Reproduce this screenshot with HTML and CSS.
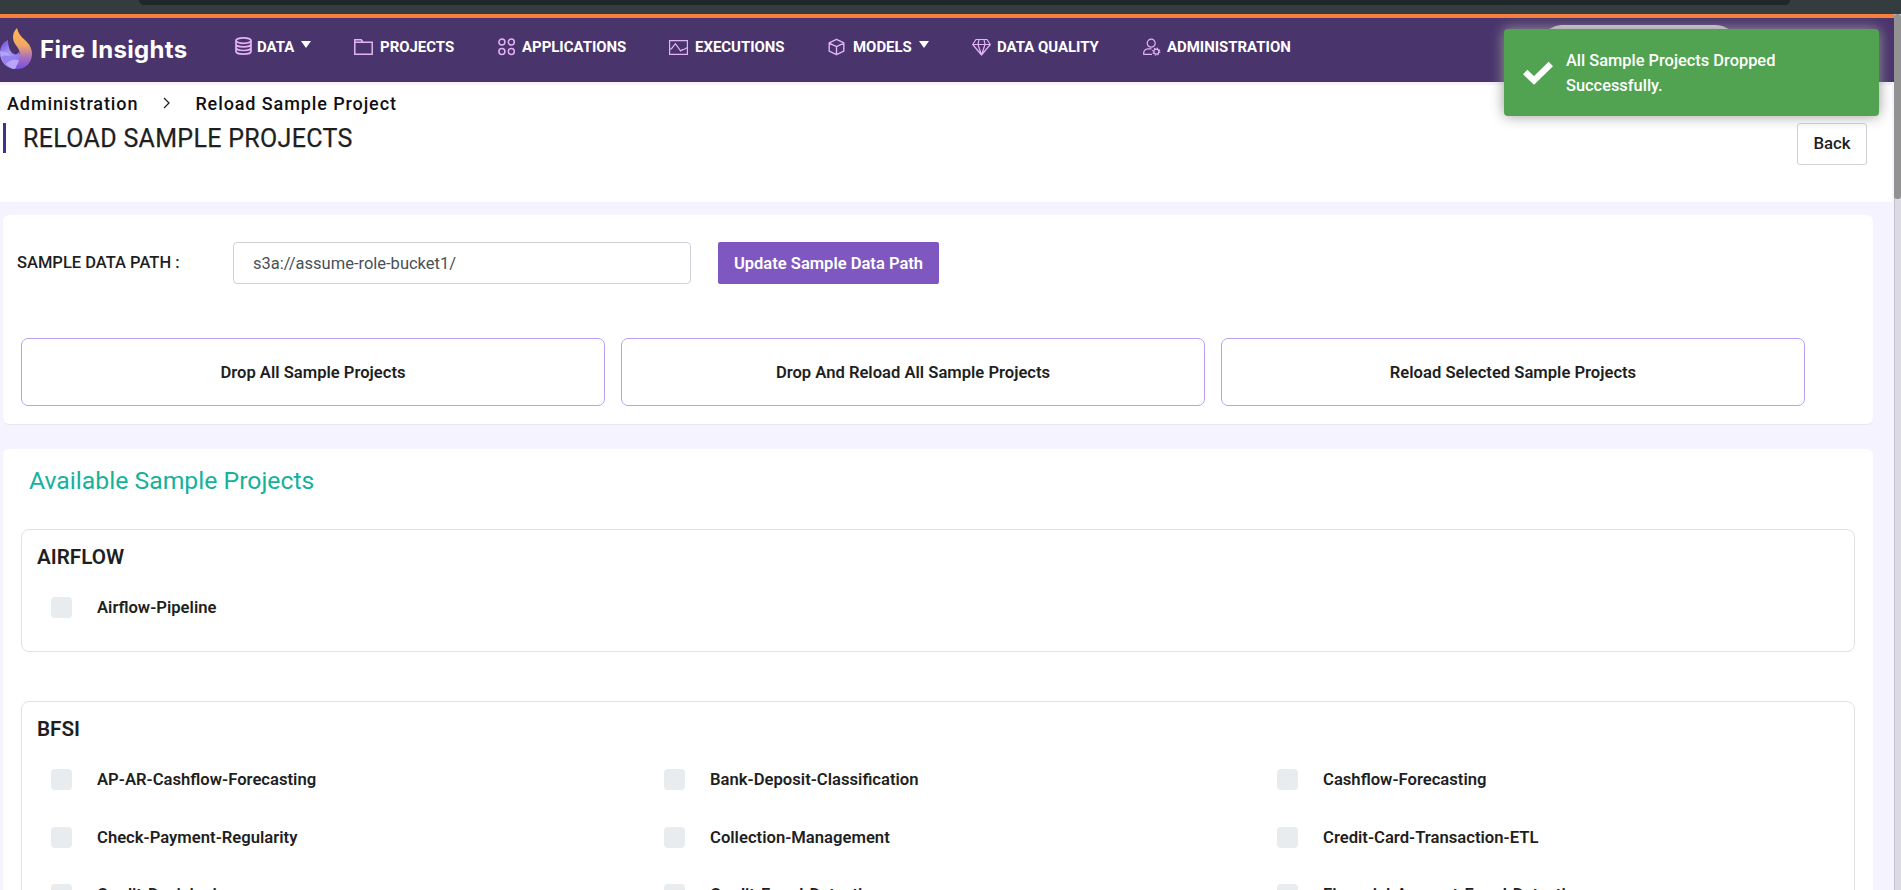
FILE: index.html
```html
<!DOCTYPE html>
<html lang="en">
<head>
<meta charset="utf-8">
<title>Fire Insights</title>
<link rel="stylesheet" href="styles.css">
</head>
<body>
<div class="chrome"><div class="chrome-bar"></div></div>
<div class="viewport">
  <div class="page">
    <header class="header">
      <div class="brand">
        <svg class="logo" width="33" height="42" viewBox="0 0 33 42">
          <defs>
            <linearGradient id="flame" x1="0" y1="0" x2="0" y2="1"><stop offset="0" stop-color="#ffb84f"/><stop offset=".42" stop-color="#f2a765"/><stop offset=".72" stop-color="#a86fbd"/><stop offset="1" stop-color="#7650e0"/></linearGradient>
            <linearGradient id="base" x1="0" y1="0" x2=".6" y2="1"><stop offset="0" stop-color="#6a45e0"/><stop offset=".5" stop-color="#a897f5"/><stop offset="1" stop-color="#8464e6"/></linearGradient>
          </defs>
          <path d="M8 12C3 14 0 19 0 25c0 9 7 16 16 16l6-8-3-9c-1 2-3 3-5 2-4-1-6-8-6-14z" fill="url(#base)"/>
          <path d="M0 23c5 0 9 2 12 6l8 3-4 9C7 41 0 34 0 23z" fill="#bdb0fa" opacity=".65"/>
          <path d="M1 29c5-3 12-1 19 3l-5 9C8 40 3 36 1 29z" fill="#8e74ec" opacity=".75"/>
          <path d="M6 36c4-5 10-5 14-3l-4 8c-4 0-7-2-10-5z" fill="#b9a6fa"/>
          <path d="M17 0c-4 4-5 9-3 14 2 4 6 7 6 13 0 5-3 10-5 14 10 1 17-6 17-15 0-6-3-10-7-14-4-3-7-7-8-12z" fill="url(#flame)"/>
        </svg>
        <span class="brand-name">Fire Insights</span>
      </div>
      <nav class="nav">
        <a class="nav-item nav-data">
          <svg width="17" height="18" viewBox="0 0 17 18"><g fill="none" stroke="#e3b3f5" stroke-width="1.7"><ellipse cx="8.5" cy="3.6" rx="7.5" ry="2.7"/><path d="M1 3.6v10.8c0 1.5 3.3 2.7 7.5 2.7s7.5-1.2 7.5-2.7V3.6M1 7.2c0 1.5 3.3 2.7 7.5 2.7S16 8.7 16 7.2M1 10.8c0 1.5 3.3 2.7 7.5 2.7s7.5-1.2 7.5-2.7"/></g></svg>
          <span>DATA</span><i class="caret"></i></a>
        <a class="nav-item nav-projects">
          <svg width="19" height="18" viewBox="0 0 19 18"><path d="M.8 16.2V1.8h6.4l1.8 2.4h9.2v12zM.8 4.2H9" fill="none" stroke="#e3b3f5" stroke-width="1.5"/></svg>
          <span>PROJECTS</span></a>
        <a class="nav-item nav-apps">
          <svg width="18" height="18" viewBox="0 0 18 18"><g fill="none" stroke="#e3b3f5" stroke-width="1.5"><circle cx="3.9" cy="4.1" r="3"/><circle cx="13.3" cy="4.1" r="3"/><circle cx="3.9" cy="13.4" r="3"/><circle cx="13.3" cy="13.4" r="3"/></g></svg>
          <span>APPLICATIONS</span></a>
        <a class="nav-item nav-exec">
          <svg width="19" height="18" viewBox="0 0 19 18"><path d="M.6 2.6h17.8v13.8H.6zM1 11.3l1.5-.6 3.9-5 5.2 7.2 1.8-1.2h1l4-2.2" fill="none" stroke="#e3b3f5" stroke-width="1.2"/></svg>
          <span>EXECUTIONS</span></a>
        <a class="nav-item nav-models">
          <svg width="18" height="18" viewBox="0 0 18 18"><path d="M8.5 1.3l7.3 3.5v8.3l-7.3 3.6-7.3-3.6V4.8zM1.2 5.2l7.3 3.5 7.3-3.5M8.5 8.7v8" fill="none" stroke="#e3b3f5" stroke-width="1.4" stroke-linejoin="round"/></svg>
          <span>MODELS</span><i class="caret"></i></a>
        <a class="nav-item nav-quality">
          <svg width="19" height="18" viewBox="0 0 19 18"><path d="M4 1.5h11l3.3 5L9.5 17 .7 6.5zM.7 6.5h17.6M7 1.5L6 6.5 9.5 17 13 6.5l-1-5" fill="none" stroke="#e3b3f5" stroke-width="1.2" stroke-linejoin="round"/></svg>
          <span>DATA QUALITY</span></a>
        <a class="nav-item nav-admin">
          <svg width="18" height="18" viewBox="0 0 18 18"><g fill="none" stroke="#e3b3f5" stroke-width="1.2"><circle cx="8.2" cy="5.2" r="4"/><path d="M9 16.3H.7c-.4-3.3 1.5-5.3 4.2-5.4h3.6"/><circle cx="13.3" cy="13.6" r="2.5"/><circle cx="13.3" cy="13.6" r="3.5" stroke-dasharray="1.4 1.35"/></g></svg>
          <span>ADMINISTRATION</span></a>
      </nav>
      <div class="user-pill"></div>
    </header>

    <section class="page-head">
      <div class="breadcrumb">
        <span>Administration</span>
        <svg width="7" height="12" viewBox="0 0 7 12"><path d="M1 1l5 5-5 5" fill="none" stroke="#222" stroke-width="1.3"/></svg>
        <span>Reload Sample Project</span>
      </div>
      <div class="title-row">
        <h1 class="title">RELOAD SAMPLE PROJECTS</h1>
        <button class="back">Back</button>
      </div>
    </section>

    <section class="card settings">
      <div class="path-row">
        <label class="path-label">SAMPLE DATA PATH :</label>
        <div class="path-input">s3a://assume-role-bucket1/</div>
        <button class="update">Update Sample Data Path</button>
      </div>
      <div class="actions">
        <button class="action">Drop All Sample Projects</button>
        <button class="action">Drop And Reload All Sample Projects</button>
        <button class="action">Reload Selected Sample Projects</button>
      </div>
    </section>

    <section class="card projects">
      <h2 class="projects-title">Available Sample Projects</h2>
      <div class="group">
        <h3 class="group-title">AIRFLOW</h3>
        <div class="items">
          <div class="item"><i class="box"></i>Airflow-Pipeline</div>
        </div>
      </div>
      <div class="group">
        <h3 class="group-title">BFSI</h3>
        <div class="items">
          <div class="item"><i class="box"></i>AP-AR-Cashflow-Forecasting</div>
          <div class="item"><i class="box"></i>Bank-Deposit-Classification</div>
          <div class="item"><i class="box"></i>Cashflow-Forecasting</div>
          <div class="item"><i class="box"></i>Check-Payment-Regularity</div>
          <div class="item"><i class="box"></i>Collection-Management</div>
          <div class="item"><i class="box"></i>Credit-Card-Transaction-ETL</div>
          <div class="item"><i class="box"></i>Credit-Decisioning</div>
          <div class="item"><i class="box"></i>Credit-Fraud-Detection</div>
          <div class="item"><i class="box"></i>Financial-Account-Fraud-Detection</div>
        </div>
      </div>
    </section>
  </div>
  <div class="scrollbar"><div class="thumb"></div></div>
</div>

<div class="toast">
  <svg width="30" height="24" viewBox="0 0 30 24"><path d="M2.200 11l8.800 8.500L27.800 3" fill="none" stroke="#fff" stroke-width="6.200"/></svg>
  <div class="toast-text">All Sample Projects Dropped Successfully.</div>
</div>
</body>
</html>
```
FILE: styles.css
```css
* { box-sizing: border-box; }
html, body { margin: 0; height: 890px; overflow: hidden; }
body {
  display: flex;
  flex-direction: column;
  background: #f5f3ff;
  color: #1f1f1f;
  font-family: Roboto, "Liberation Sans", sans-serif;
}
h1, h2, h3 { margin: 0; }
button { font-family: inherit; padding: 0; color: inherit; }

.chrome { flex: none; height: 14px; padding: 0 111px 0 139px; background: #353c40; }
.chrome-bar { height: 5px; background: #20272b; border-radius: 0 0 12px 12px; }

.viewport { flex: 1; min-height: 0; display: flex; }
.page { flex: 1; min-width: 0; overflow: hidden; }
.scrollbar { flex: none; width: 7px; background: #dcdae3; border-left: 1px solid #c3c1cb; }
.thumb { width: 7px; height: 185px; margin-left: -1px; background: #929292; border-radius: 3px; }

.header {
  position: relative;
  display: flex;
  height: 68px;
  border-top: 4px solid #f67f3c;
  background: #4a346c;
}
.brand { width: 235px; display: flex; padding-top: 10px; }
.logo { flex: none; }
.brand-name {
  margin-left: 7px;
  font: 700 24px/44px Inter, sans-serif;
  letter-spacing: 0.3px;
  color: #fff;
  white-space: nowrap;
}
.nav { display: flex; padding-top: 18px; height: 40px; }
.nav-item {
  display: flex;
  align-items: center;
  height: 22px;
  color: #fff;
  font-size: 14.95px;
  font-weight: 700;
  line-height: 22px;
  white-space: nowrap;
}
.nav-item svg { flex: none; margin: 0 6px 0 0; }
.nav-item.nav-data svg { margin: -2px 5px 0 0; }
.nav-data { width: 119px; }
.nav-projects { width: 144px; }
.nav-apps { width: 171px; }
.nav-exec { width: 159px; }
.nav-models { width: 144px; }
.nav-quality { width: 171px; }
.nav-projects svg, .nav-exec svg, .nav-models svg { margin-right: 7px; }
.nav-item.nav-projects svg, .nav-item.nav-exec svg, .nav-item.nav-models svg { margin-right: 7px; }
.caret {
  margin: -5px 0 0 7px;
  border: 5px solid transparent;
  border-top: 7px solid #fff;
  border-bottom: 0;
}
.user-pill {
  position: absolute;
  left: 1542px;
  top: 7px;
  width: 194px;
  height: 40px;
  border-radius: 20px;
  background: #d3d0d9;
}

.page-head { height: 117px; margin: 3px 2px 0 0; background: #fff; }
.breadcrumb {
  display: flex;
  align-items: center;
  height: 38px;
  padding: 0 0 2px 7px;
  color: #111;
  font-size: 18px;
  font-weight: 500;
  letter-spacing: 0.9px;
}
.breadcrumb svg { margin: 0 25px; }
.title-row { display: flex; justify-content: space-between; padding: 0 25px 0 3px; }
.title {
  height: 30px;
  border-left: 3px solid #44318d;
  padding-left: 17px;
  font-size: 25px;
  font-weight: 400;
  line-height: 32px;
  letter-spacing: 0.32px;
  -webkit-text-stroke: 0.25px #1f1f1f;
}
.back {
  width: 70px;
  height: 42px;
  border: 1px solid #ced1d8;
  border-radius: 3px;
  background: #fff;
  padding-bottom: 2px;
  font-size: 16.8px;
  font-weight: 500;
}

.card { width: 1870px; margin-left: 3px; background: #fff; border-radius: 6px; }
.settings { height: 209px; margin-top: 13px; padding: 27px 0 0 14px; box-shadow: 0 1px 0 #e9e6f2; }
.path-row { display: flex; height: 42px; font-size: 16.5px; }
.path-label { width: 216px; line-height: 41px; font-weight: 500; }
.path-input {
  width: 458px;
  padding-left: 19px;
  border: 1px solid #ced1d8;
  border-radius: 4px;
  color: #495057;
  line-height: 41px;
}
.update {
  width: 221px;
  margin-left: 27px;
  border: 0;
  border-radius: 2px;
  background: #7e57c0;
  color: #fff;
  font-size: 16.55px;
  font-weight: 600;
}
.actions { display: flex; gap: 16px; margin: 54px 0 0 4px; }
.action {
  width: 584px;
  height: 68px;
  border: 1px solid #bb9ff5;
  border-radius: 7px;
  background: #fff;
  font-size: 16.6px;
  font-weight: 600;
}

.projects { height: 520px; margin-top: 25px; padding: 14px 18px 0; }
.projects-title {
  padding-left: 8px;
  color: #14b29a;
  font-size: 24.76px;
  font-weight: 400;
  line-height: 36px;
}
.group { min-height: 123px; padding: 0 15px 0; border: 1px solid #e2e2e4; border-radius: 8px; }
.projects-title + .group { margin-top: 30px; }
.group + .group { margin-top: 49px; }
.group-title { height: 50px; font-size: 20.67px; font-weight: 600; line-height: 54px; }
.items { display: grid; grid-template-columns: repeat(3, 613px); grid-auto-rows: 57.6px; }
.item {
  display: flex;
  align-items: center;
  height: 55px;
  padding-left: 14px;
  font-size: 16.65px;
  font-weight: 600;
  white-space: nowrap;
}
.box { width: 21px; height: 21px; margin-right: 25px; border-radius: 4px; background: #e8ecef; }

.toast {
  position: absolute;
  left: 1504px;
  top: 29px;
  width: 375px;
  height: 87px;
  display: flex;
  align-items: center;
  padding-left: 19px;
  border-radius: 4px;
  background: #51a351;
  box-shadow: 0 0 14px #999;
}
.toast svg { flex: none; }
.toast-text {
  width: 240px;
  margin: 1px 0 0 13px;
  color: #fff;
  font-size: 16.4px;
  font-weight: 500;
  line-height: 25px;
}
```
